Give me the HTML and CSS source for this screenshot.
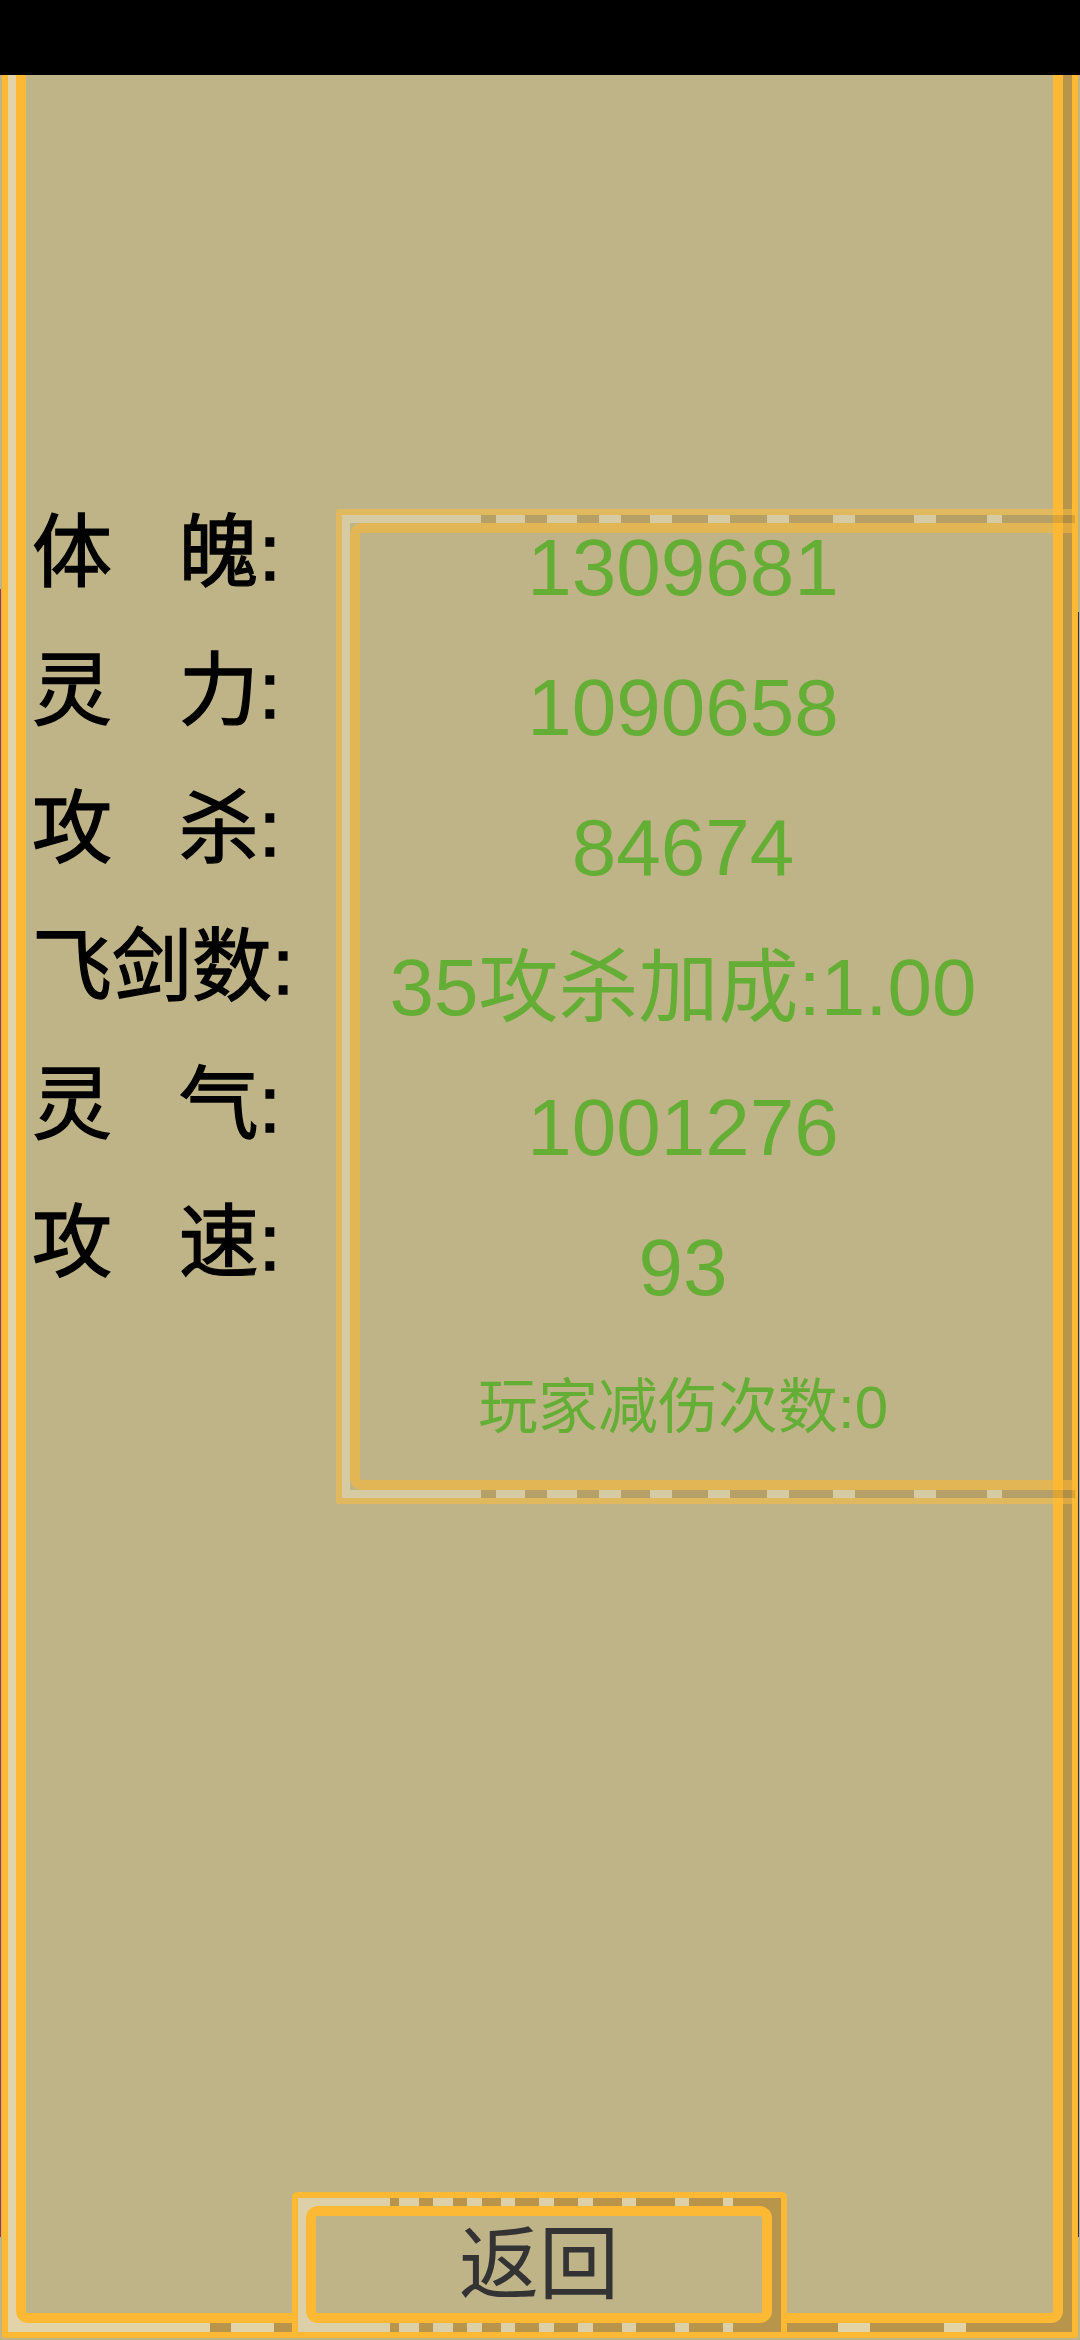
FILE: index.html
```html
<!DOCTYPE html>
<html lang="zh-CN">
<head>
<meta charset="utf-8">
<title>属性</title>
<link rel="stylesheet" href="styles.css">
</head>
<body>
<div class="status"></div>
<div class="frame">
  <div class="frame-inner">
    <div class="stats">
      <div class="labels">
        <div class="label">体   魄:</div>
        <div class="label">灵   力:</div>
        <div class="label">攻   杀:</div>
        <div class="label">飞剑数:</div>
        <div class="label">灵   气:</div>
        <div class="label">攻   速:</div>
      </div>
      <div class="panel">
        <div class="panel-bevel">
          <div class="panel-inner">
            <div class="values">
              <div class="value">1309681</div>
              <div class="value">1090658</div>
              <div class="value">84674</div>
              <div class="value">35攻杀加成:1.00</div>
              <div class="value">1001276</div>
              <div class="value">93</div>
              <div class="value small">玩家减伤次数:0</div>
            </div>
          </div>
        </div>
      </div>
    </div>
    <div class="btn"><div class="btn-inner">返回</div></div>
  </div>
</div>
</body>
</html>
```
FILE: styles.css
```css
html, body {
  margin: 0;
  padding: 0;
}
body {
  width: 1080px;
  height: 2340px;
  overflow: hidden;
  background: #bfb487;
  font-family: "Liberation Sans", "Noto Sans CJK SC", sans-serif;
  position: relative;
}
body::before {
  content: "";
  position: absolute;
  left: 0;
  top: 589px;
  width: 1px;
  height: 1648px;
  background: #b8341f;
}
body::after {
  content: "";
  position: absolute;
  left: 1078px;
  top: 612px;
  width: 1px;
  height: 1625px;
  background: #2d2b5c;
}
.status {
  height: 75px;
  background: #000;
}
.frame {
  --lt: #e2d3a8;
  --dk: #b8954b;
  margin: 0 2px;
  height: 2263px;
  box-sizing: border-box;
  border: 6px solid #fdb933;
  border-top: 0;
  border-radius: 0 0 4px 4px;
  padding: 0 9px 9px 8px;
}
.frame, .btn {
  background: linear-gradient(to right,
    var(--lt) 0 19%, var(--dk) 19% 21%, var(--lt) 21% 25%, var(--dk) 25% 28%,
    var(--lt) 28% 32%, var(--dk) 32% 35%, var(--lt) 35% 38%, var(--dk) 38% 42%,
    var(--lt) 42% 45%, var(--dk) 45% 50%, var(--lt) 50% 53%, var(--dk) 53% 58%,
    var(--lt) 58% 61%, var(--dk) 61% 67%, var(--lt) 67% 70%, var(--dk) 70% 78%,
    var(--lt) 78% 81%, var(--dk) 81% 88%, var(--lt) 88% 90%, var(--dk) 90% 100%);
  background-clip: padding-box;
}
.frame-inner {
  height: 100%;
  box-sizing: border-box;
  border: 10px solid #fdb933;
  border-top: 0;
  border-radius: 0 0 12px 12px;
  background: #bfb487;
  display: flex;
  flex-direction: column;
}
.stats {
  margin-top: 409px;
  display: flex;
  align-items: flex-start;
}
.labels {
  flex: none;
  width: 310px;
  box-sizing: border-box;
  padding-left: 6px;
}
.label {
  height: 138px;
  font-size: 80px;
  line-height: 138px;
  white-space: pre;
  color: #000;
  -webkit-text-stroke: 1.3px #000;
}
.panel {
  --lt: rgba(236, 226, 192, 0.5);
  --dk: rgba(170, 130, 55, 0.4);
  flex: none;
  width: 739px;
  box-sizing: border-box;
  margin-top: 25px;
  border: 6px solid rgba(252, 188, 60, 0.55);
  border-right: 0;
  border-radius: 3px 0 0 3px;
}
.panel-bevel {
  border-style: solid;
  border-width: 8px 0 8px 8px;
  border-image: linear-gradient(to right,
    var(--lt) 0 19%, var(--dk) 19% 21%, var(--lt) 21% 25%, var(--dk) 25% 28%,
    var(--lt) 28% 32%, var(--dk) 32% 35%, var(--lt) 35% 38%, var(--dk) 38% 42%,
    var(--lt) 42% 45%, var(--dk) 45% 50%, var(--lt) 50% 53%, var(--dk) 53% 58%,
    var(--lt) 58% 61%, var(--dk) 61% 67%, var(--lt) 67% 70%, var(--dk) 70% 78%,
    var(--lt) 78% 81%, var(--dk) 81% 88%, var(--lt) 88% 90%, var(--dk) 90% 100%) 8 0 8 8;
}
.panel-inner {
  border: 10px solid rgba(252, 184, 52, 0.6);
  border-right: 0;
  border-radius: 12px 0 0 12px;
  padding-bottom: 2px;
}
.values {
  width: 646px;
  margin-top: -35px;
}
.value {
  height: 140px;
  line-height: 140px;
  font-size: 80px;
  text-align: center;
  color: #64ae36;
  white-space: nowrap;
}
.value.small {
  font-size: 60px;
}
.btn {
  --lt: #ddd0a8;
  --dk: #b8954b;
  flex: none;
  align-self: center;
  margin-top: auto;
  margin-bottom: -25px;
  width: 495px;
  box-sizing: border-box;
  border: 6px solid #fdb933;
  border-radius: 5px;
  padding: 8px 9px 9px 8px;
}
.btn-inner {
  border: 10px solid #fdb933;
  border-radius: 12px;
  background: #bfb487;
  height: 97px;
  line-height: 97px;
  font-size: 80px;
  text-align: center;
  color: #333;
}
```
